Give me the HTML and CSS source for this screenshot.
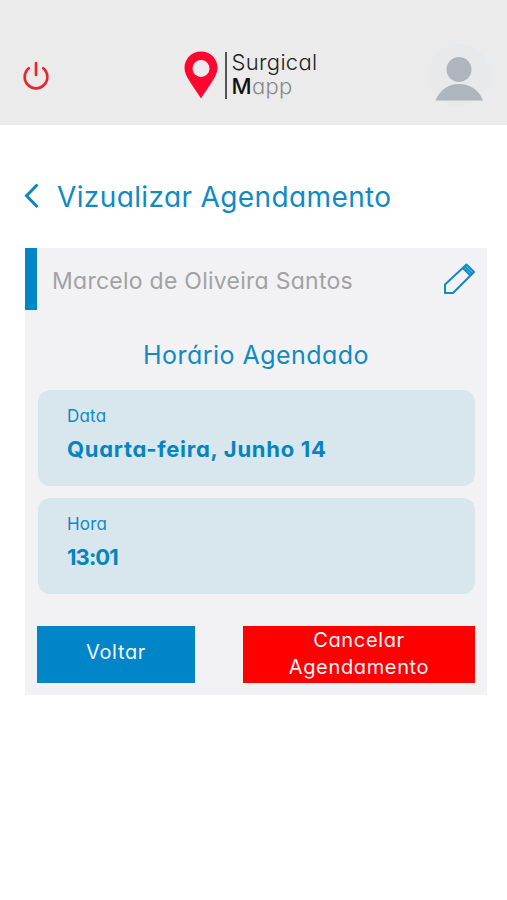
FILE: index.html
```
<!DOCTYPE html>
<html lang="pt-BR">
<head>
<meta charset="utf-8">
<meta name="viewport" content="width=device-width, initial-scale=1.0">
<title>Surgical Mapp</title>
<link rel="stylesheet" href="styles.css">
</head>
<body>
    <header class="header">
        <svg class="power" viewBox="0 0 28 30" fill="none" stroke="#e9252d" stroke-width="2.7" stroke-linecap="round">
            <path d="M14 3V15"/>
            <path d="M6.8 8.3a11.3 11.3 0 1 0 14.4 0"/>
        </svg>
        <div class="logo">
            <svg class="pin" viewBox="0 0 34 48">
                <path fill="#ff0530" fill-rule="evenodd" d="M17 0.5C7.5 0.5 0.5 7.7 0.5 16.8C0.5 25 7 32 17 47.5C27 32 33.500 25 33.500 16.800C33.500 7.700 26.500 0.500 17 0.500zM17 9A8.500 8.500 0 1 1 17 26A8.500 8.500 0 1 1 17 9z"/>
            </svg>
            <div class="logo-text">
                <div class="surgical">Surgical</div>
                <div class="mapp"><b>M</b>app</div>
            </div>
        </div>
        <svg class="avatar" viewBox="0 0 62 62">
            <circle cx="31" cy="31" r="31" fill="#e7e9eb"/>
            <circle cx="31" cy="25.500" r="12.500" fill="#aeb5bd"/>
            <path fill="#aeb5bd" d="M7.500 56.500C12 46 20 40 31 40S51 46 55 56.500z"/>
        </svg>
    </header>
    <div class="title">
        <svg class="back" viewBox="0 0 15 26" fill="none" stroke="#0b86c1" stroke-width="3">
            <path d="M13.500 1.500L2.500 12.700L13.500 24"/>
        </svg>
        <h1>Vizualizar Agendamento</h1>
    </div>
    <div class="card">
        <div class="patient">
            <span class="name">Marcelo de Oliveira Santos</span>
            <svg class="pencil" viewBox="0 0 32 32" fill="none" stroke="#0f8ac4" stroke-width="2" stroke-linejoin="round">
                <path d="M2 30V21.500L23.500 1.500L31 9L10 30z"/>
                <path d="M20 5L27.500 12.500M22 3.500L29 10.500" stroke-width="2.200"/>
            </svg>
        </div>
        <h2>Horário Agendado</h2>
        <div class="box">
            <div class="label">Data</div>
            <div class="value date">Quarta-feira, Junho 14</div>
        </div>
        <div class="box">
            <div class="label">Hora</div>
            <div class="value time">13:01</div>
        </div>
        <div class="buttons">
            <button class="btn voltar">Voltar</button>
            <button class="btn cancelar">Cancelar<br>Agendamento</button>
        </div>
    </div>
</body>
</html>
```
FILE: styles.css
```
* {
    box-sizing: border-box;
}

body {
    margin: 0;
    background: #fff;
    color: #0f8ac4;
    font-family: Inter, "Liberation Sans", sans-serif;
    font-feature-settings: "cv11";
}

.header {
    display: flex;
    align-items: center;
    justify-content: space-between;
    height: 125px;
    padding: 25px 17px 0 22px;
    background: #ebebeb;
}

.power {
    width: 28px;
    height: 30px;
}

.logo {
    display: flex;
    align-items: center;
    margin-left: 23px;
}

.pin {
    width: 34px;
    height: 48px;
    margin-right: 7px;
}

.logo-text {
    height: 47px;
    padding-left: 5px;
    border-left: 2px solid #555;
    font-size: 22px;
    line-height: 24px;
    font-weight: 300;
    letter-spacing: 0.3px;
    color: #222;
}

.surgical {
    margin-top: -2px;
}

.mapp {
    color: #888;
}

.mapp b {
    font-weight: 500;
    color: #111;
}

.avatar {
    width: 62px;
    height: 62px;
}

.title {
    display: flex;
    align-items: center;
    height: 123px;
    padding: 19px 0 0 24px;
}

.back {
    width: 15px;
    height: 26px;
    margin-right: 18px;
}

h1, h2 {
    margin: 0;
    font-weight: 400;
}

h1 {
    padding-top: 2px;
    font-size: 28px;
    letter-spacing: 0.38px;
}

.card {
    width: 462px;
    height: 447px;
    margin-left: 25px;
    padding-right: 12px;
    background: #f2f2f4;
}

.patient {
    display: flex;
    align-items: center;
    justify-content: space-between;
    height: 62px;
    padding-left: 15px;
    border-left: 12px solid #0086c6;
}

.name {
    margin-top: 4px;
    color: #a2a2a4;
    font-size: 23px;
    letter-spacing: 0.26px;
}

.pencil {
    width: 32px;
    height: 32px;
}

h2 {
    height: 80px;
    padding-left: 12px;
    font-size: 25px;
    line-height: 91px;
    letter-spacing: 0.45px;
    text-align: center;
}

.box {
    height: 96px;
    margin: 0 0 12px 13px;
    padding: 16px 0 0 29px;
    border-radius: 12px;
    background: #d8e7ed;
}

.label {
    font-size: 17px;
    line-height: 20px;
    letter-spacing: 0.2px;
}

.value {
    margin-top: 9px;
    color: #0784bf;
    font-size: 22px;
    line-height: 28px;
    font-weight: 700;
}

.date {
    letter-spacing: 0.72px;
}

.time {
    letter-spacing: -0.9px;
}

.buttons {
    display: flex;
    justify-content: space-between;
    margin: 32px 0 0 12px;
}

.btn {
    height: 57px;
    padding: 0;
    border: 0;
    color: #f4f5fa;
    font: inherit;
    font-feature-settings: inherit;
    font-size: 20px;
    line-height: 27px;
    letter-spacing: 0.65px;
}

.voltar {
    width: 158px;
    padding-bottom: 4px;
    background: #0086c8;
}

.cancelar {
    width: 232px;
    padding-bottom: 2px;
    background: #f00;
}
```
